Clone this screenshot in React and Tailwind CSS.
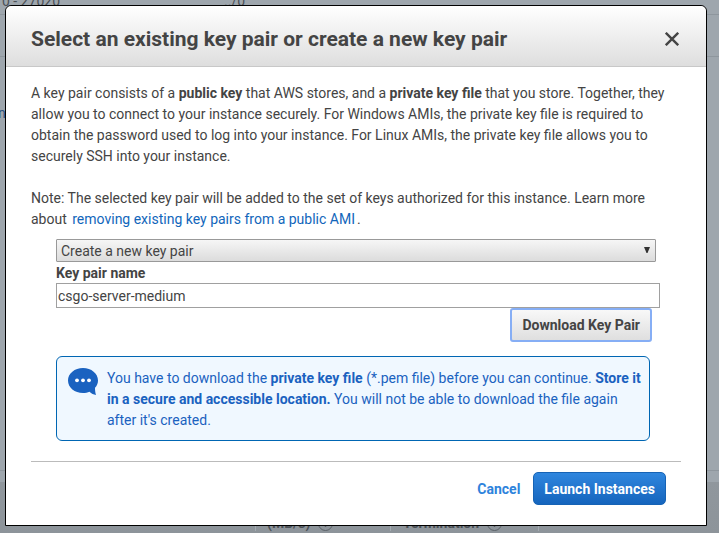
import { useState } from 'react';

export default function App() {
  const [keyName, setKeyName] = useState('csgo-server-medium');

  return (
    <div className="relative min-h-screen overflow-hidden bg-[#9ea6ad] font-['Roboto','Liberation_Sans',sans-serif] text-sm leading-[21px] text-[#444]">
      <Backdrop />
      <div
        role="dialog"
        aria-labelledby="dialog-title"
        className="relative mt-[5px] mr-3 ml-[5px] rounded-t-md border border-black bg-white"
      >
        <header className="flex items-center justify-between rounded-t-md border-b border-[#c8c8c8] bg-linear-to-b from-white to-[#dedede] pt-[19px] pr-[27px] pb-[13px] pl-[25px]">
          <h1 id="dialog-title" className="text-[21px] leading-7 font-bold">
            Select an existing key pair or create a new key pair
          </h1>
          <button type="button" aria-label="Close">
            <svg width="14" height="14" viewBox="0 0 14 14" fill="none" stroke="#444" strokeWidth="2.4">
              <path d="M0.800 0.800L13.200 13.200M13.200 0.800L0.800 13.200" />
            </svg>
          </button>
        </header>

        <div className="px-[25px] pt-4">
          <p>
            A key pair consists of a <b>public key</b> that AWS stores, and a <b>private key file</b> that you
            store. Together, they allow you to connect to your instance securely. For Windows AMIs, the private
            key file is required to obtain the password used to log into your instance. For Linux AMIs, the
            private key file allows you to securely SSH into your instance.
          </p>
          <p className="mt-[21px]">
            Note: The selected key pair will be added to the set of keys authorized for this instance. Learn more
            about{' '}
            <a href="#remove" className="mx-0.5 text-[#1166bb]">
              removing existing key pairs from a public AMI
            </a>
            .
          </p>

          <form className="mt-[9px] mr-[21px] ml-[25px]" onSubmit={(e) => e.preventDefault()}>
            <div className="relative mr-1">
              <select
                aria-label="Key pair option"
                className="block h-[23px] w-full appearance-none rounded-[1px] border border-[#999] bg-linear-to-b from-[#f6f6f6] to-[#dcdcdc] px-1 pt-px leading-[21px]"
              >
                <option>Create a new key pair</option>
                <option>Choose an existing key pair</option>
                <option>Proceed without a key pair</option>
              </select>
              <svg className="pointer-events-none absolute top-2 right-[6px]" width="6" height="6" viewBox="0 0 6 6">
                <path d="M0 0H6L3.5 6H2.5Z" fill="#333" />
              </svg>
            </div>
            <label htmlFor="key-name" className="block pt-px leading-5 font-bold">
              Key pair name
            </label>
            <input
              id="key-name"
              type="text"
              value={keyName}
              onChange={(e) => setKeyName(e.target.value)}
              className="block h-[25px] w-full border border-[#a0a0a0] bg-white px-px"
            />
            <div className="mr-2 flex justify-end">
              <button
                type="submit"
                className="h-[34px] rounded-[3px] border-2 border-[#86aef5] bg-linear-to-b from-[#f8f8f8] to-[#dfdfdf] px-[10px] font-bold"
              >
                Download Key Pair
              </button>
            </div>
            <div className="mt-[14px] mr-[10px] flex rounded-md border border-[#0066b3] bg-[#f0f8ff] pt-[11px] pr-1 pb-[9px] pl-[11px] text-[#1a62c0]">
              <SpeechBubble />
              <p className="ml-[9px] flex-1">
                You have to download the <b>private key file</b> (*.pem file) before you can continue.{' '}
                <b>Store it in a secure and accessible location.</b> You will not be able to download the file
                again after it's created.
              </p>
            </div>
          </form>

          <footer className="mt-5 flex items-center justify-end gap-[13px] border-t border-[#bbb] pt-[10px] pr-[15px] pb-5 font-bold">
            <button type="button" className="pt-0.5 text-[#2e83dc]">
              Cancel
            </button>
            <button
              type="button"
              className="h-[33px] rounded-[5px] border border-[#1663b5] bg-linear-to-b from-[#2f86de] to-[#1565bd] px-[10px] pt-0.5 text-white"
            >
              Launch Instances
            </button>
          </footer>
        </div>
      </div>
    </div>
  );
}

// Dimmed wizard page that shows around the edges of the dialog
function Backdrop() {
  return (
    <div aria-hidden="true" className="absolute inset-0 overflow-hidden text-[#4b5157]">
      <div className="absolute inset-x-0 top-[14px] h-[43px] border-y border-[#8e969d]" />
      <div className="absolute inset-x-0 top-[470px] bottom-0 border-t border-[#8e969d] pt-[11px]">
        <div className="h-full bg-linear-to-b from-[#90979d] to-[#8d949a]" />
      </div>
      <span className="absolute -top-[9px] left-0.5">0 - 27020</span>
      <span className="absolute -top-[9px] left-[224px]">../0</span>
      <span className="absolute top-[103px] -left-0.5 text-[#2c4f7c]">n</span>
      <div className="absolute top-[512px] left-[255px] flex h-[19px] w-[284px] border-x border-[#a3abb1] font-bold">
        <div className="flex w-[135px] items-center gap-2 border-r border-[#a3abb1] pt-1 pl-[11px]">
          (MB/s) <InfoIcon />
        </div>
        <div className="flex items-center gap-2 pt-1 pl-3">
          Termination <InfoIcon />
        </div>
      </div>
    </div>
  );
}

function InfoIcon() {
  return (
    <svg width="15" height="15" viewBox="0 0 15 15" fill="none" stroke="#5b6268">
      <circle cx="7.5" cy="7.5" r="7" />
      <path d="M7.5 6.5V11M7.5 4V5.2" strokeWidth="1.5" />
    </svg>
  );
}

function SpeechBubble() {
  return (
    <svg className="shrink-0" width="30" height="28" viewBox="0 0 30 28" fill="#1a62c0">
      <path d="M15 0C6.7 0 0 5.5 0 12.5S6.7 25 15 25C17.4 25 19.7 24.6 21.5 23.8C23.5 25.5 25.5 26.7 28 27C27.3 25 27 22.5 27 19.8C29 17.7 30 15.2 30 12.5C30 5.5 23.3 0 15 0Z" />
      <g fill="#fff">
        <circle cx="9" cy="12.3" r="1.9" />
        <circle cx="15" cy="12.3" r="1.9" />
        <circle cx="21" cy="12.3" r="1.9" />
      </g>
    </svg>
  );
}
